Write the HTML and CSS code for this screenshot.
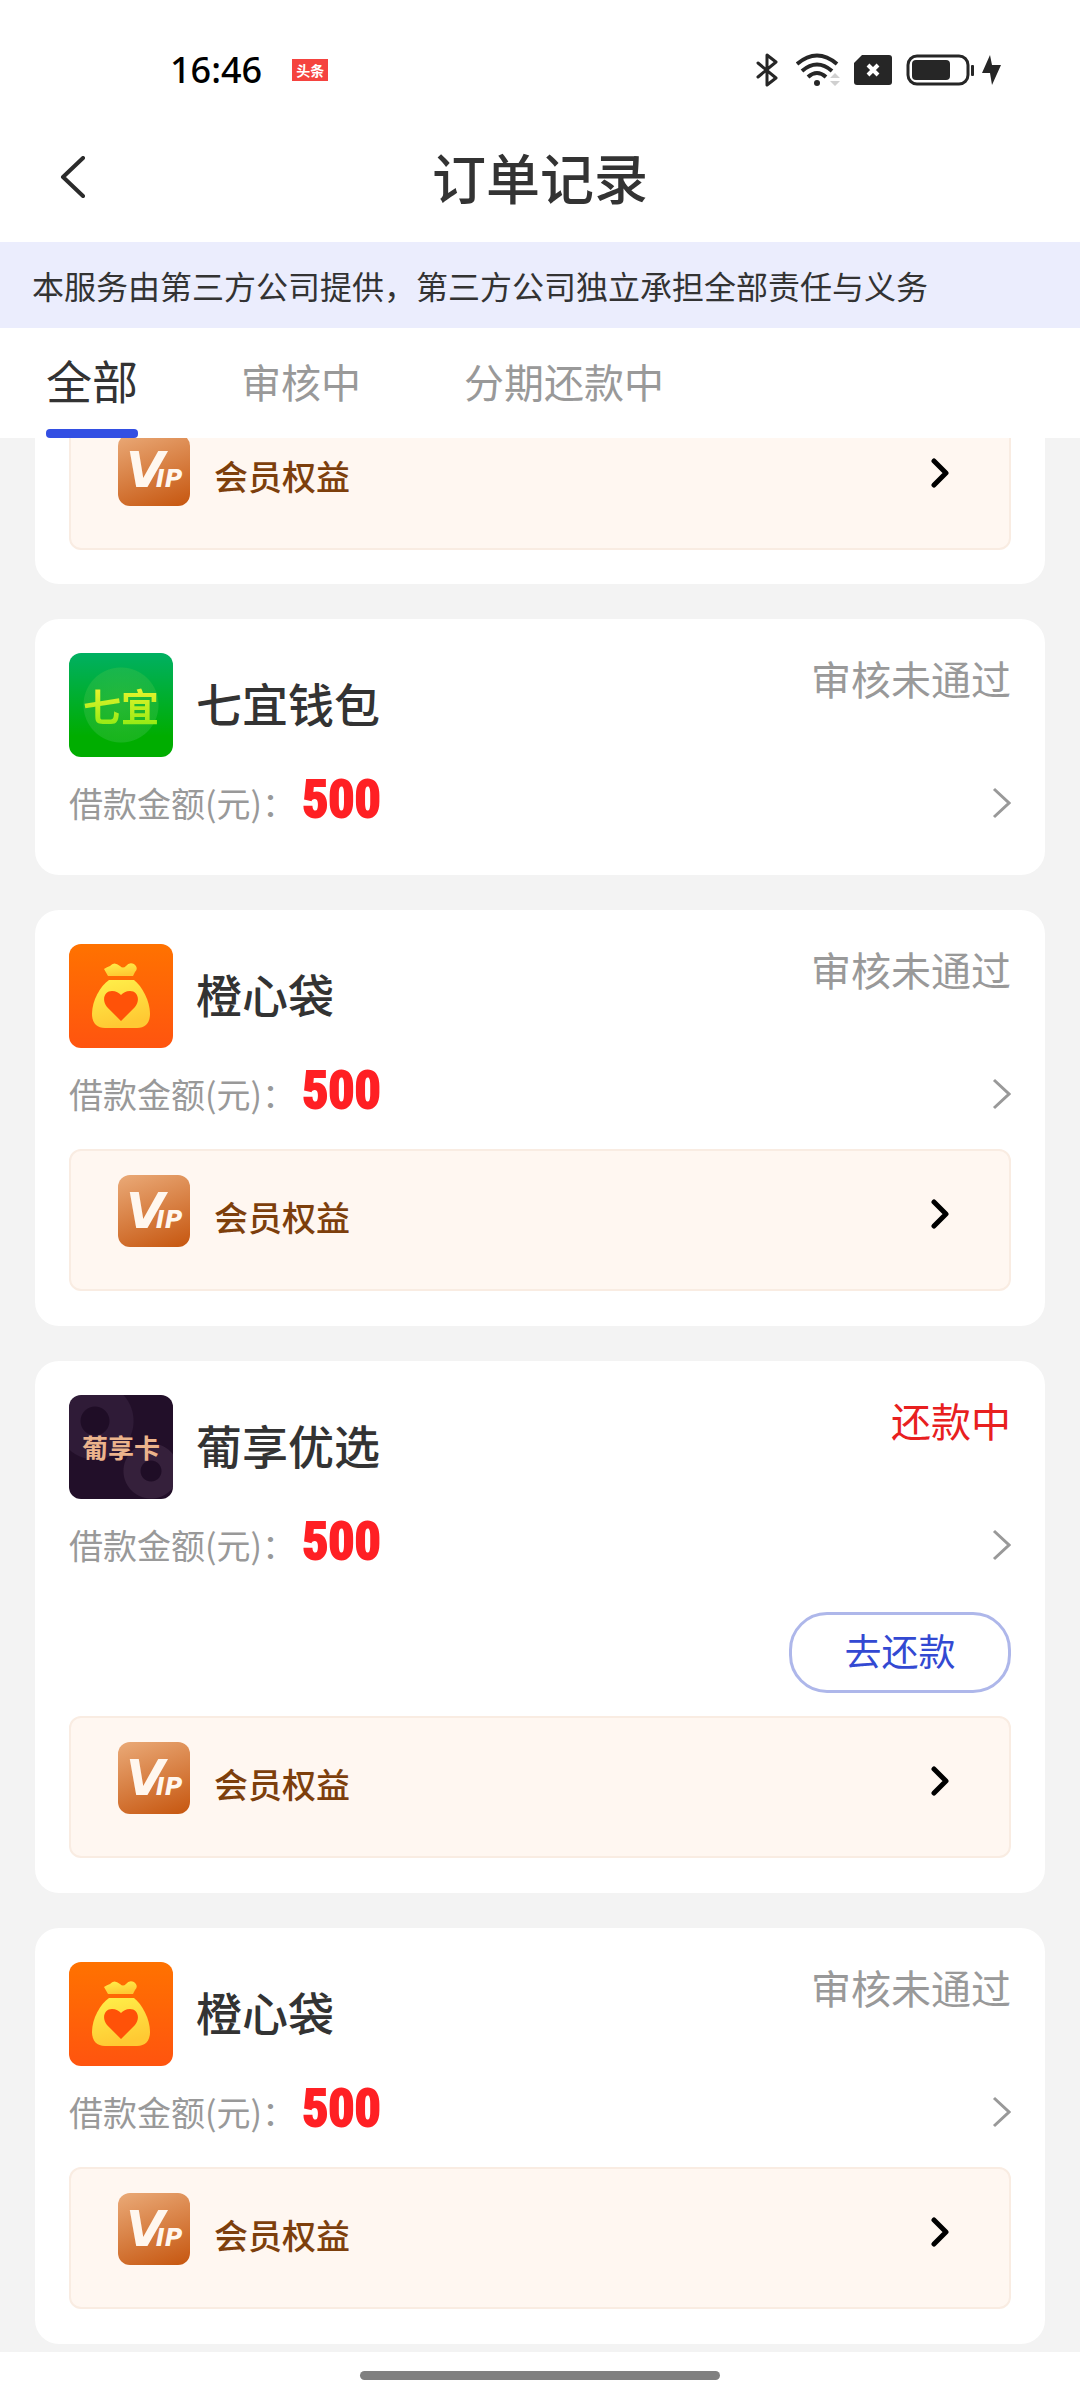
FILE: index.html
```html
<!DOCTYPE html>
<html lang="zh-CN">
<head>
<meta charset="utf-8">
<meta name="viewport" content="width=device-width, initial-scale=1">
<title>订单记录</title>
<link rel="stylesheet" href="styles.css">
</head>
<body>
<svg class="defs" aria-hidden="true">
  <defs>
    <linearGradient id="orange" x1="0" y1="0" x2="0" y2="1">
      <stop offset="0" stop-color="#ff7200"/>
      <stop offset="1" stop-color="#ff540f"/>
    </linearGradient>
    <linearGradient id="gold" x1="0" y1="0" x2="0.3" y2="1">
      <stop offset="0" stop-color="#fff04a"/>
      <stop offset="1" stop-color="#ffc933"/>
    </linearGradient>
  </defs>
  <symbol id="bag" viewBox="0 0 104 104">
    <rect width="104" height="104" fill="url(#orange)"/>
    <path fill="url(#gold)" d="M39 32 L35 25 Q38 23 41 22 Q45 17 51 22 Q54 25 57 22 Q60 18 65 20 Q70 24 66 28 L64 32Z"/>
    <path fill="url(#gold)" d="M40 36 H65 C73 42 81 57 81 70 C81 79 76 84 68 84 H36 C28 84 23 79 23 70 C23 57 31 42 40 36Z"/>
    <path fill="#ff5208" d="M52 77 L38 63 C32 55 36 47 43 47 C47 47 50 49 52 51 C54 49 57 47 61 47 C68 47 72 55 66 63Z"/>
  </symbol>
  <symbol id="go" viewBox="0 0 20 32">
    <path d="M3 2 L18 16 L3 30" fill="none" stroke="#999" stroke-width="3"/>
  </symbol>
  <symbol id="go-bold" viewBox="0 0 18 30">
    <path d="M3 3 L15 15 L3 27" fill="none" stroke="#000" stroke-width="5" stroke-linecap="round" stroke-linejoin="round"/>
  </symbol>
</svg>

<div class="app">
  <div class="statusbar">
    <div class="status-left">
      <span class="clock">16:46</span>
      <span class="news">头条</span>
    </div>
    <div class="status-right">
      <svg width="26" height="34" viewBox="0 0 26 34"><path d="M2 10 L20 25 L11 32 V2 L20 9 L2 24" fill="none" stroke="#262626" stroke-width="3" stroke-linejoin="round" stroke-linecap="round"/></svg>
      <svg width="44" height="34" viewBox="0 0 44 34"><g fill="none" stroke="#262626" stroke-width="4"><path d="M1 11 Q21 -6 41 11"/><path d="M6 18 Q21 5 36 18"/><path d="M12 24 Q21 16 30 24"/></g><circle cx="21" cy="30" r="3" fill="#262626"/><path d="M34 25 L39 20 L44 25Z M34 28 H44 L39 33Z" fill="#d0d0d0"/></svg>
      <svg width="38" height="30" viewBox="0 0 38 30"><path d="M8 0 H35 Q38 0 38 3 V27 Q38 30 35 30 H3 Q0 30 0 27 V8Z" fill="#262626"/><path d="M14 10 L24 20 M24 10 L14 20" stroke="#fff" stroke-width="4"/></svg>
      <svg width="96" height="32" viewBox="0 0 96 32"><rect x="2" y="2" width="60" height="28" rx="9" fill="none" stroke="#262626" stroke-width="3"/><rect x="6" y="6" width="38" height="20" rx="4" fill="#262626"/><rect x="65" y="11" width="3" height="11" rx="1" fill="#262626"/><path d="M84 1 L76 19 H84 L86 31 L95 11 H86Z" fill="#262626"/></svg>
    </div>
  </div>

  <header class="header">
    <button class="back" type="button" aria-label="返回"><svg width="26" height="42" viewBox="0 0 26 42"><path d="M23 2 L3 21 L23 40" fill="none" stroke="#2b2b2b" stroke-width="4" stroke-linecap="round" stroke-linejoin="round"/></svg></button>
    <h1 class="title">订单记录</h1>
  </header>

  <p class="notice">本服务由第三方公司提供，第三方公司独立承担全部责任与义务</p>

  <nav class="tabs">
    <button class="tab tab-active" type="button">全部</button>
    <button class="tab" type="button">审核中</button>
    <button class="tab" type="button">分期还款中</button>
  </nav>

  <main class="list">
    <article class="card card-scrolled">
      <a class="vip" href="#"><span class="vip-icon"><b class="vip-v">V</b><b class="vip-ip">IP</b></span><span class="vip-label">会员权益</span><svg class="vip-go"><use href="#go-bold"/></svg></a>
    </article>

    <article class="card">
      <div class="top">
        <div class="logo logo-green"><span>七宜</span></div>
        <h2 class="name">七宜钱包</h2>
        <span class="state">审核未通过</span>
      </div>
      <a class="amount" href="#"><span class="label">借款金额(元)：</span><strong class="sum">500</strong><svg class="go"><use href="#go"/></svg></a>
    </article>

    <article class="card">
      <div class="top">
        <svg class="logo"><use href="#bag"/></svg>
        <h2 class="name">橙心袋</h2>
        <span class="state">审核未通过</span>
      </div>
      <a class="amount" href="#"><span class="label">借款金额(元)：</span><strong class="sum">500</strong><svg class="go"><use href="#go"/></svg></a>
      <a class="vip" href="#"><span class="vip-icon"><b class="vip-v">V</b><b class="vip-ip">IP</b></span><span class="vip-label">会员权益</span><svg class="vip-go"><use href="#go-bold"/></svg></a>
    </article>

    <article class="card">
      <div class="top">
        <div class="logo logo-grape"><span>葡享卡</span></div>
        <h2 class="name">葡享优选</h2>
        <span class="state state-due">还款中</span>
      </div>
      <a class="amount" href="#"><span class="label">借款金额(元)：</span><strong class="sum">500</strong><svg class="go"><use href="#go"/></svg></a>
      <div class="actions"><button class="repay" type="button">去还款</button></div>
      <a class="vip" href="#"><span class="vip-icon"><b class="vip-v">V</b><b class="vip-ip">IP</b></span><span class="vip-label">会员权益</span><svg class="vip-go"><use href="#go-bold"/></svg></a>
    </article>

    <article class="card">
      <div class="top">
        <svg class="logo"><use href="#bag"/></svg>
        <h2 class="name">橙心袋</h2>
        <span class="state">审核未通过</span>
      </div>
      <a class="amount" href="#"><span class="label">借款金额(元)：</span><strong class="sum">500</strong><svg class="go"><use href="#go"/></svg></a>
      <a class="vip" href="#"><span class="vip-icon"><b class="vip-v">V</b><b class="vip-ip">IP</b></span><span class="vip-label">会员权益</span><svg class="vip-go"><use href="#go-bold"/></svg></a>
    </article>
  </main>

  <footer class="gesture"><span class="pill"></span></footer>
</div>
</body>
</html>
```
FILE: styles.css
```css
* { box-sizing: border-box; }

body {
  margin: 0;
  background: #fff;
  color: #333;
  font-family: "Noto Sans CJK SC", sans-serif;
}

h1, h2, p { margin: 0; font-weight: 500; }
a { color: inherit; text-decoration: none; }
button { padding: 0; border: 0; background: none; color: inherit; font: inherit; }
svg { display: block; flex: none; }
.defs { position: absolute; width: 0; height: 0; }

.app { display: flex; flex-direction: column; height: 100vh; }

.statusbar {
  display: flex;
  flex: none;
  align-items: center;
  justify-content: space-between;
  padding: 44px 78px 18px 170px;
  height: 114px;
}
.status-left, .status-right { display: flex; align-items: center; }
.status-left { gap: 30px; }
.status-right { gap: 14px; }
.clock { color: #000; font: 500 36px/50px "Noto Sans", sans-serif; }
.news {
  width: 36px;
  background: #f5433f;
  color: #fff;
  font-size: 14px;
  font-weight: 700;
  line-height: 22px;
  text-align: center;
}

.header {
  display: grid;
  flex: none;
  grid-template-columns: 86px 1fr 86px;
  align-items: center;
  padding-bottom: 3px;
  height: 128px;
}
.back { justify-self: end; }
.title { font-size: 54px; line-height: 80px; text-align: center; }

.notice {
  flex: none;
  padding: 0 32px;
  background: #ebedfd;
  font-size: 32px;
  font-weight: 400;
  line-height: 86px;
  white-space: nowrap;
}

.tabs {
  display: flex;
  flex: none;
  gap: 103px;
  padding: 0 46px;
  height: 110px;
}
.tab {
  padding-top: 5px;
  border-bottom: 9px solid transparent;
  color: #999;
  font-size: 40px;
  line-height: 60px;
}
.tab-active { position: relative; padding-top: 0; color: #333; font-size: 46px; }
.tab-active::after {
  position: absolute;
  right: 0;
  bottom: -9px;
  left: 0;
  height: 9px;
  border-radius: 4px;
  background: #334fe3;
  content: "";
}

.list {
  display: flex;
  flex: 1;
  flex-direction: column;
  gap: 35px;
  overflow: hidden;
  padding: 0 35px;
  background: #f3f3f3;
}
.card {
  flex: none;
  padding: 34px 34px 35px;
  border-radius: 24px;
  background: #fff;
}
.card-scrolled {
  overflow: hidden;
  padding-top: 0;
  padding-bottom: 34px;
  border-radius: 0 0 24px 24px;
}

.top { display: flex; gap: 23px; height: 104px; }
.logo {
  display: flex;
  flex: none;
  align-items: center;
  justify-content: center;
  overflow: hidden;
  width: 104px;
  height: 104px;
  border-radius: 12px;
}
.logo-green {
  background:
    radial-gradient(circle at 50% 50%, #5cc84a66 0, #3cc04a66 37px, transparent 38px),
    linear-gradient(#00b062, #00ad00 80%);
}
.logo-green span {
  background: linear-gradient(#fbf531, #8bea12);
  background-clip: text;
  color: transparent;
  font-size: 38px;
  font-weight: 700;
  line-height: 48px;
}
.logo-grape {
  background:
    radial-gradient(circle at 82px 76px, #1f0d26 10px, #35203b 11px, #35203b 27px, transparent 28px),
    radial-gradient(circle at 26px 26px, #1f0d26 14px, #2f1b37 15px, #2f1b37 38px, transparent 39px),
    #220f29;
}
.logo-grape span { color: #ecb48c; font-size: 26px; font-weight: 700; line-height: 40px; }
.name { font-size: 46px; line-height: 98px; }
.state { margin-left: auto; color: #999; font-size: 40px; line-height: 50px; }
.state-due { color: #e8201f; }

.amount {
  display: flex;
  align-items: baseline;
  margin: 14px 0 5px;
  height: 64px;
}
.label { color: #999; font-size: 34px; line-height: 58px; }
.sum {
  margin-left: 6px;
  color: #ff2024;
  font: 700 52px/58px "Liberation Sans Narrow", "Roboto Condensed", Roboto, sans-serif;
  -webkit-text-stroke: 2px #ff2024;
}
.go { align-self: center; margin-left: auto; width: 20px; height: 32px; }

.actions { display: flex; justify-content: flex-end; margin-top: 35px; }
.repay {
  padding-bottom: 6px;
  width: 222px;
  height: 81px;
  border: 3px solid #aeb7ea;
  border-radius: 38px;
  color: #3349d2;
  font-size: 37px;
}

.vip {
  display: flex;
  align-items: flex-start;
  margin-top: 23px;
  padding: 24px 60px 24px 47px;
  height: 142px;
  border: 2px solid #f9ece2;
  border-radius: 12px;
  background: #fff7f1;
}
.card-scrolled .vip { margin-top: -30px; }
.vip-icon {
  display: flex;
  flex: none;
  align-items: baseline;
  padding-left: 8px;
  width: 72px;
  height: 72px;
  border-radius: 12px;
  background: linear-gradient(160deg, #eaaa78, #c6560f);
  color: #fff7ef;
  font-family: "DejaVu Sans", sans-serif;
  font-style: italic;
  line-height: 72px;
}
.vip-v { font-size: 50px; }
.vip-ip { margin-left: -9px; font-size: 24px; }
.vip-label {
  margin-left: 24px;
  color: #7d3f0c;
  font-size: 34px;
  font-weight: 500;
  line-height: 84px;
}
.vip-go { margin: 24px 0 0 auto; width: 18px; height: 30px; }

.gesture {
  display: flex;
  flex: none;
  align-items: center;
  justify-content: center;
  padding-bottom: 2px;
  height: 48px;
  background: #fff;
}
.pill { width: 360px; height: 9px; border-radius: 5px; background: #808080; }
```
